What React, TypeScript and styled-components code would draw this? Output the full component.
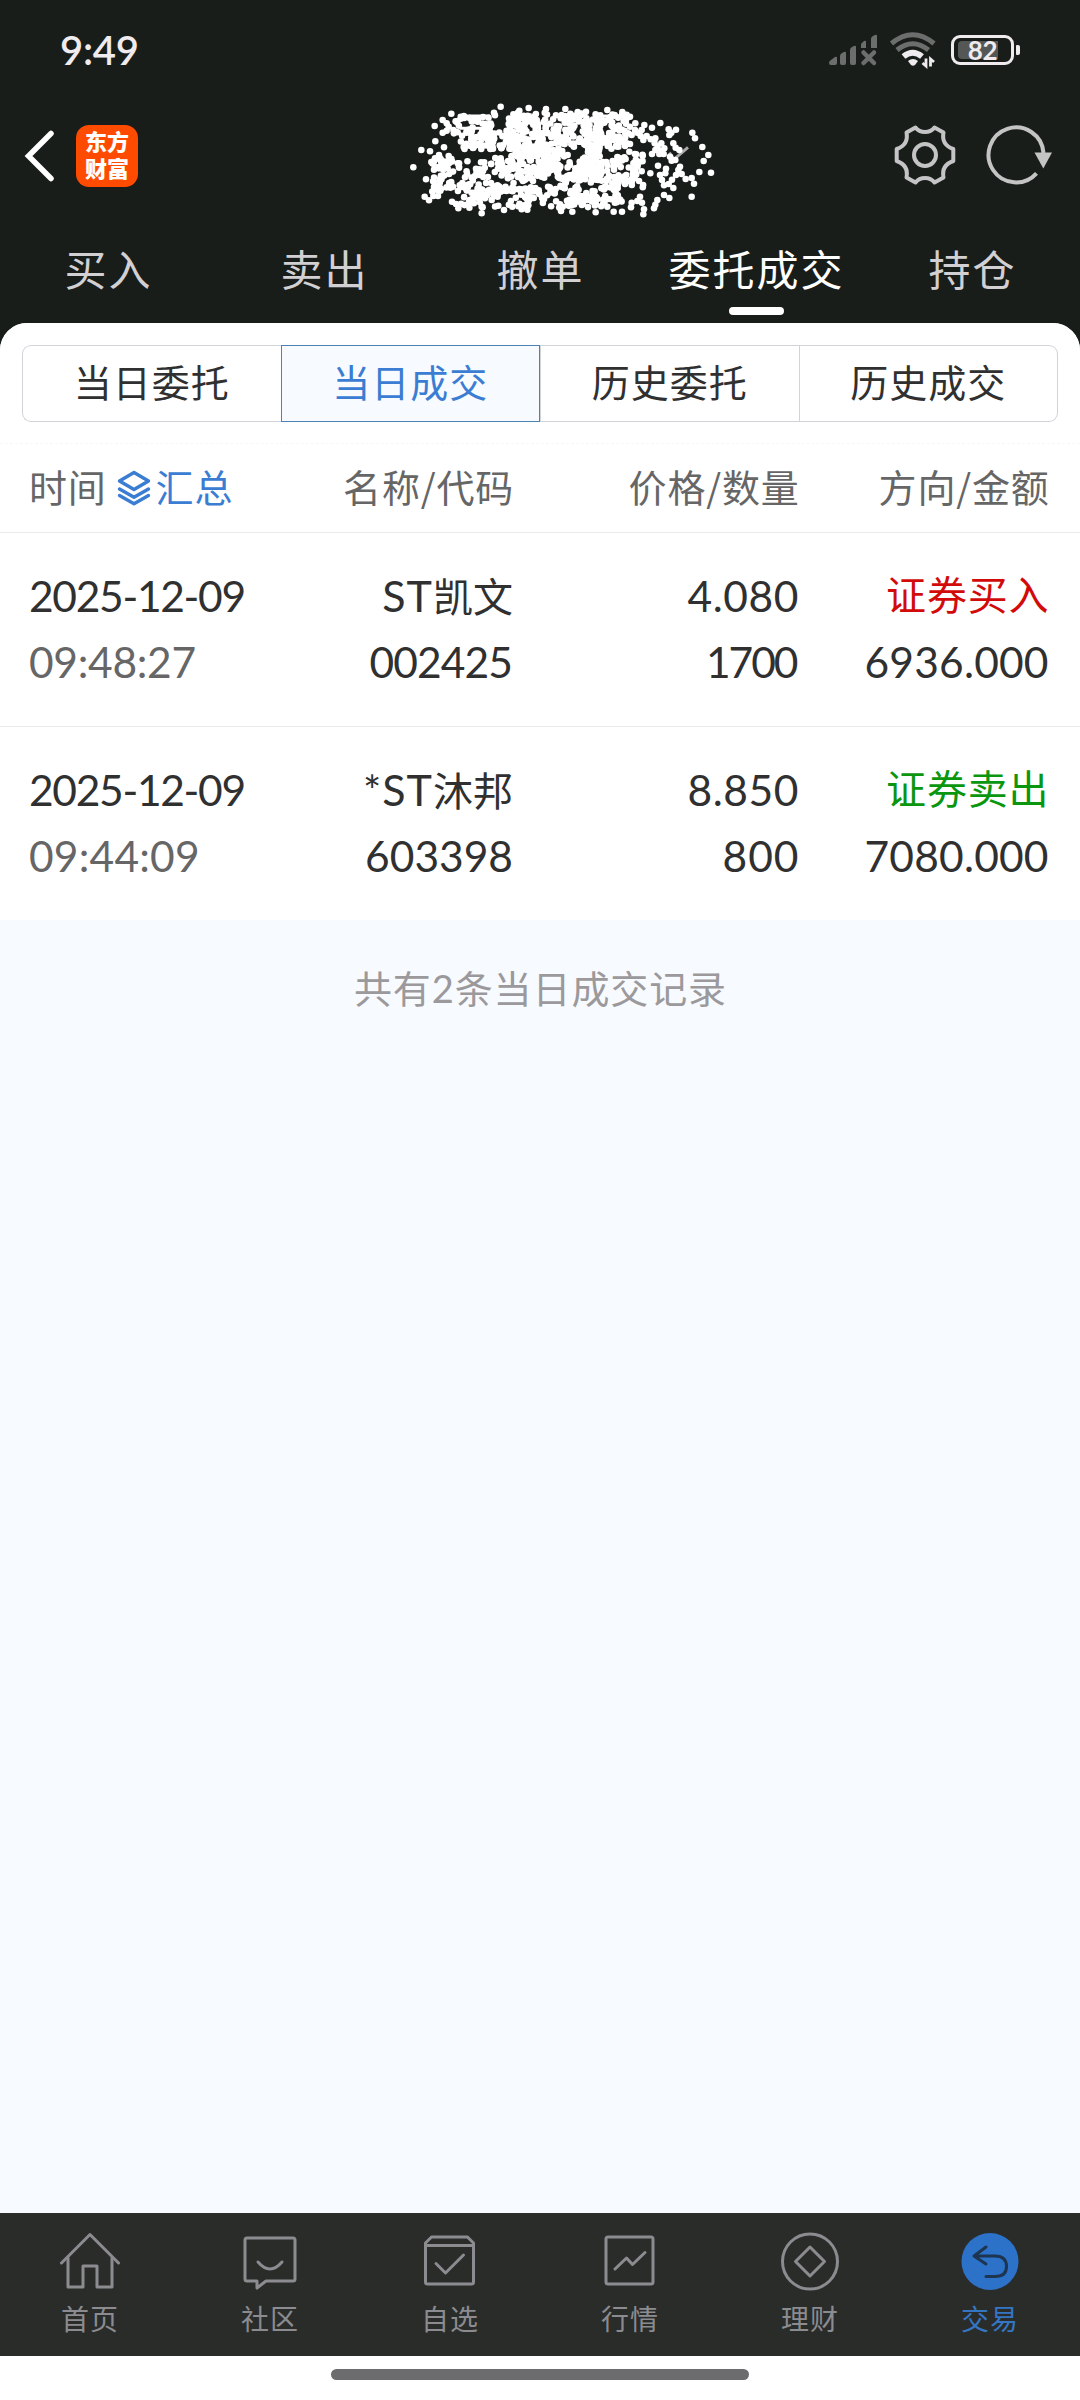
import React from "react";
import styled, { createGlobalStyle, css } from "styled-components";

const GlobalStyle = createGlobalStyle`
  * { box-sizing: border-box; }
  html, body { margin: 0; padding: 0; background: #fff; }
  body { font-family: Lato, "Noto Sans CJK SC", sans-serif; }
`;

const cjk = css`font-family: "Noto Sans CJK SC", sans-serif;`;

const Screen = styled.main`
  width: 1080px;
  height: 2400px;
  display: flex;
  flex-direction: column;
  background: #191d1a;
  overflow: hidden;
`;

const StatusBar = styled.div`
  height: 100px;
  padding: 0 60px 0 60px;
  display: flex;
  align-items: center;
  justify-content: space-between;
`;

const Clock = styled.span`
  color: #efebee;
  font-size: 40px;
  font-weight: 600;
  line-height: 48px;
  letter-spacing: -0.3px;
`;

const StatusIcons = styled.div`
  display: flex;
  align-items: center;
`;

const BatteryBox = styled.div`
  margin-left: 14px;
  display: flex;
  align-items: center;
  gap: 2px;
`;

const BatteryBody = styled.div`
  width: 63px;
  height: 30px;
  border: 3px solid #efebee;
  border-radius: 9px;
  padding: 3px 4px;
`;

const BatteryFill = styled.div`
  width: 40px;
  height: 18px;
  border-radius: 4px 0 0 4px;
  background: #555756;
  color: #efebee;
  font-size: 26px;
  font-weight: 700;
  line-height: 18px;
  text-align: right;
  padding-right: 1px;
  letter-spacing: -0.5px;
`;

const BatteryNub = styled.div`
  width: 4px;
  height: 10px;
  border-radius: 1px 2px 2px 1px;
  background: #efebee;
`;

const TitleBar = styled.header`
  height: 120px;
  display: grid;
  grid-template-columns: 405px 1fr 205px;
  padding: 0 26px 0 22px;
`;

const TitleLeft = styled.div`
  display: flex;
  align-items: center;
  padding-bottom: 8px;
  gap: 19px;
`;

const TitleRight = styled.div`
  display: flex;
  align-items: center;
  justify-content: flex-end;
  gap: 29px;
  padding-bottom: 10px;
`;

const Logo = styled.div`
  ${cjk}
  width: 62px;
  height: 62px;
  border-radius: 13px;
  background: #ff4b00;
  color: #fff;
  font-size: 22px;
  font-weight: 900;
  line-height: 27px;
  text-align: center;
  word-break: break-all;
  padding: 2px 8px 0;
`;

const TopTabs = styled.nav`
  height: 103px;
  display: grid;
  grid-template-columns: repeat(5, 1fr);
`;

const TopTab = styled.div<{ $active?: boolean }>`
  ${cjk}
  display: flex;
  flex-direction: column;
  align-items: center;
  padding-top: 16px;
  font-size: 42px;
  line-height: 64px;
  letter-spacing: 2px;
  text-indent: 1px;
  white-space: nowrap;
  color: ${(p) => (p.$active ? "#ffffff" : "#d2d0d3")};
`;

const Underline = styled.i`
  width: 55px;
  height: 8px;
  border-radius: 4px;
  margin-top: 7px;
  background: #fff;
`;

const Panel = styled.section`
  flex: 1;
  background: #f7faff;
  border-radius: 27px 27px 0 0;
  overflow: hidden;
`;

const Filters = styled.div`
  height: 121px;
  padding: 22px;
  background: #fff;
  border-bottom: 1px dashed #f7f7f7;
  display: flex;
`;

const Filter = styled.div<{ $active?: boolean }>`
  ${cjk}
  flex: 1 1 0;
  height: 77px;
  border: 1px solid ${(p) => (p.$active ? "#4d82b4" : "#d0d3d8")};
  background: ${(p) => (p.$active ? "#f7faff" : "#fff")};
  color: ${(p) => (p.$active ? "#3b7dd2" : "#303030")};
  font-size: 38px;
  line-height: 70px;
  letter-spacing: 1px;
  text-align: center;
  &:first-child { border-radius: 9px 0 0 9px; border-right: 0; }
  &:last-child { border-radius: 0 9px 9px 0; border-left: 0; }
`;

const gridRow = css`
  display: grid;
  grid-template-columns: 245px 239px 285.5px 250px;
  padding-left: 29px;
  background: #fff;
  border-bottom: 1px solid #ebebeb;
`;

const TableHead = styled.div`
  ${gridRow}
  ${cjk}
  height: 89px;
  color: #666;
  font-size: 38px;
  line-height: 83px;
  letter-spacing: 0.8px;
  white-space: nowrap;
`;

const HeadCell = styled.div`
  text-align: right;
  margin-right: -1px;
`;

const TimeHead = styled.div`
  display: flex;
  align-items: flex-start;
`;

const Summary = styled.span`
  display: flex;
  align-items: center;
  gap: 5px;
  margin-left: 10px;
  color: #3b7dd2;
  svg { margin-top: 4px; }
`;

const Record = styled.div<{ $last?: boolean }>`
  ${gridRow}
  height: 194px;
  padding-top: 30px;
  ${(p) => p.$last && "border-bottom: 0; height: 193px;"}
`;

const Cell = styled.div<{ $left?: boolean }>`
  display: flex;
  flex-direction: column;
  align-items: ${(p) => (p.$left ? "flex-start" : "flex-end")};
`;

const Line = styled.span<{ $color?: string; $track?: number }>`
  height: 66px;
  line-height: 66px;
  font-size: 42.5px;
  white-space: nowrap;
  color: ${(p) => p.$color || "#303030"};
  letter-spacing: ${(p) => p.$track ?? 0}px;
  margin-right: ${(p) => -(p.$track ?? 0)}px;
`;

const Name = styled(Line)`
  font-size: 40px;
  line-height: 65px;
`;

const Latin = styled.span`
  font-size: 43px;
  letter-spacing: 1px;
`;

const Total = styled.p`
  margin: 0;
  padding-top: 38px;
  text-align: center;
  text-indent: 1px;
  color: #9b999b;
  font-size: 38px;
  line-height: 60px;
  letter-spacing: 0.9px;
`;

const BottomNav = styled.nav`
  height: 143px;
  background: #2a2c2a;
  display: grid;
  grid-template-columns: repeat(6, 1fr);
`;

const NavItem = styled.div<{ $active?: boolean }>`
  ${cjk}
  display: flex;
  flex-direction: column;
  align-items: center;
  padding-top: 17px;
  color: ${(p) => (p.$active ? "#3476c4" : "#8b8b90")};
  font-size: 28px;
  line-height: 40px;
  letter-spacing: 1px;
  svg { margin-bottom: 6px; flex: none; }
`;

const GestureArea = styled.div`
  height: 44px;
  background: #fff;
  display: flex;
  justify-content: center;
  padding-top: 13px;
`;

const GestureBar = styled.div`
  width: 418px;
  height: 11px;
  border-radius: 6px;
  background: #6c6b6d;
`;

const WifiSvg = styled.svg`
  margin-left: 11px;
`;

function Signal() {
  return (
    <svg width="50" height="36" viewBox="828 33 50 36" fill="#6c6e6d">
      <path d="M829 64q0-2 2-3l4-3q2-1 2 1v5q0 2-2 2h-4q-2 0-2-2z" />
      <path d="M840 57q0-2 2-3l2-1q2-1 2 1v10q0 2-2 2h-2q-2 0-2-2z" />
      <path d="M850 51q0-2 2-3l2-1q2-1 2 1v16q0 2-2 2h-2q-2 0-2-2z" />
      <path d="M861 46q0-2 2-3l1-1q2-1 2 1v6h-5zM871 40q0-2 2-3l2-1q2-1 2 1v12h-6z" />
      <path d="M863.500 53.500l10.500 10.500M874 53.500l-10.500 10.500" stroke="#6c6e6d" strokeWidth="4.500" strokeLinecap="round" />
    </svg>
  );
}

function Wifi() {
  return (
    <WifiSvg width="48" height="38" viewBox="889 32 48 38" fill="none">
      <path d="M891.500 44.500q21.200-17.500 42.500 0" stroke="#6c6e6d" strokeWidth="5" />
      <path d="M897 51q15.700-12.500 31.500 0" stroke="#6c6e6d" strokeWidth="5" />
      <path d="M903.500 57.500q9.200-7.500 18.500 0" stroke="#efebee" strokeWidth="6" />
      <path d="M908 62q5-4 10 0l-3 4q-2 1.500-4 0z" fill="#efebee" />
      <path d="M926 59.500v7.500l-3.500-3M930.500 67.500v-7.500l3.500 3" stroke="#efebee" strokeWidth="2.800" />
    </WifiSvg>
  );
}

function Back() {
  return (
    <svg width="35" height="56" viewBox="22 128 35 56" fill="none">
      <path d="M51 133.500L28.500 156 51 178.500" stroke="#fff" strokeWidth="5.500" strokeLinecap="round" />
    </svg>
  );
}

function Gear() {
  return (
    <svg width="64" height="64" viewBox="-32 -32 64 64" fill="none" stroke="#c4c3c5" strokeWidth="4" strokeLinejoin="round">
      <circle r="11" />
      <path d="M-9.500-27.500Q-6-23 0-23T9.500-27.500L18.500-22.500C17-15 20-9 28.300-6V6C20 9 17 15 18.500 22.500L9.500 27.500Q6 23 0 23T-9.500 27.500L-18.500 22.500C-17 15-20 9-28.300 6V-6C-20-9-17-15-18.500-22.500Z" />
    </svg>
  );
}

function Refresh() {
  return (
    <svg width="68" height="64" viewBox="-30 -32 68 64" fill="none">
      <path d="M20.500 18.300A27.500 27.500 0 1 1 27.500-2" stroke="#c4c4c4" strokeWidth="4" />
      <path d="M18.500-2.500H36L27.300 13.500Z" fill="#c4c4c4" />
    </svg>
  );
}

// Stray dots round the edge of the masked account name.
const EDGE_DOTS: number[][] = [
  [100, 262], [124, 210], [150, 214], [164, 138], [166, 184], [138, 298], [134, 350], [147, 361], [160, 348], [174, 348],
  [188, 120], [200, 152], [188, 158], [200, 130], [206, 140], [214, 101], [362, 80], [342, 98], [446, 84], [418, 92], [498, 87], [556, 87],
  [593, 96], [618, 95], [682, 90], [727, 96], [750, 110], [766, 130], [793, 135], [816, 143], [841, 129], [866, 148],
  [874, 158], [888, 149], [868, 165], [937, 158], [945, 175], [967, 201], [985, 225], [971, 243], [958, 276], [993, 278],
  [942, 311], [935, 350], [935, 294], [917, 297], [900, 260], [895, 270], [905, 282], [888, 285], [876, 299], [880, 324],
  [866, 312], [852, 345], [868, 354], [832, 360], [826, 374], [822, 385], [790, 403], [792, 388], [753, 382], [726, 395],
  [701, 395], [647, 397], [577, 395], [543, 393], [442, 389], [425, 388], [372, 390], [305, 400], [308, 382], [235, 385],
  [228, 372], [216, 365], [780, 350], [786, 368], [772, 363], [755, 368], [811, 280], [834, 257], [858, 266], [856, 280],
  [840, 285], [846, 300], [852, 316], [162, 320], [183, 326], [154, 246], [165, 235], [177, 225], [192, 202], [206, 228],
  [880, 190], [887, 203], [898, 210], [870, 230], [875, 242], [886, 240], [800, 168], [812, 178], [824, 190], [833, 200],
  [843, 213], [826, 210], [816, 222], [838, 222], [853, 205], [826, 175], [790, 180], [782, 168], [851, 222], [844, 190],
  [750, 192], [748, 215], [735, 190], [765, 150], [750, 140], [772, 158], [785, 150], [738, 120], [745, 160], [755, 165],
];

function scatter(): number[][] {
  let seed = 90217;
  const next = () => {
    seed = (seed * 16807) % 2147483647;
    return seed / 2147483647;
  };
  const dots: number[][] = [];
  const zones: [number, number, number, number, number][] = [
    [220, 105, 345, 165, 42],
    [245, 155, 400, 208, 72],
    [385, 96, 565, 230, 165],
    [555, 100, 740, 210, 145],
    [380, 195, 540, 295, 95],
    [155, 232, 405, 335, 118],
    [415, 245, 605, 383, 135],
    [605, 175, 665, 305, 75],
    [585, 245, 712, 380, 88],
    [700, 222, 800, 333, 54],
    [240, 320, 445, 383, 56],
    [590, 345, 730, 385, 20],
  ];
  const holes = [
    [512, 300, 20], [547, 352, 16], [356, 180, 13], [562, 208, 14],
    [390, 345, 10], [640, 318, 11], [575, 270, 12], [725, 335, 14],
  ];
  zones.forEach(([x0, y0, x1, y1, n]) => {
    for (let i = 0; i < n; i++) {
      const x = x0 + (x1 - x0) * next() + (next() - 0.5) * 16;
      const y = y0 + (y1 - y0) * next();
      if (!holes.some(([hx, hy, r]) => Math.hypot(x - hx, y - hy) < r)) dots.push([x, y]);
    }
  });
  return dots;
}

const DOTS = [...EDGE_DOTS, ...scatter()];

const ScribbleSvg = styled.svg`
  display: block;
  margin-left: -47px;
  flex: none;
`;

function Scribble() {
  return (
    <ScribbleSvg width="360" height="120" viewBox="0 60 1080 360" fill="#fff">
      <path d="M868 218L882 238 924 202" fill="none" stroke="#aaa9ab" strokeWidth="9" />
      <path d="M235 108H330M240 145H330M405 104H455M640 108H735M700 150H735" stroke="#fff" strokeWidth="9" />
      {DOTS.map(([x, y], i) => (
        <circle key={i} cx={x} cy={y} r="9.800" />
      ))}
    </ScribbleSvg>
  );
}

function Layers() {
  return (
    <svg width="34" height="36" viewBox="0 0 34 36" fill="none" stroke="#3b7dd2" strokeWidth="3.400" strokeLinejoin="round" strokeLinecap="round">
      <path d="M17 2.500L31.500 11 17 19.500 2.500 11Z" />
      <path d="M2.500 19L17 27.200 31.500 19M2.500 25.500L17 33.700 31.500 25.500" />
    </svg>
  );
}

const NAV_ICONS: Record<string, React.ReactNode> = {
  home: (
    <>
      <path d="M1.500 33L30 4.500 58.500 33" />
      <path d="M8 28V57H23V36H37V57H52V28" />
    </>
  ),
  community: (
    <>
      <path d="M7 8H53Q55 8 55 10V49Q55 51 53 51H26L17 58V51H7Q5 51 5 49V10Q5 8 7 8Z" />
      <path d="M18 32Q30 46 42 32" />
    </>
  ),
  favorites: (
    <>
      <path d="M5.500 13L11.500 7H47.500L53.500 13V52Q53.500 54 51.500 54H7.500Q5.500 54 5.500 52ZM5.500 15.500H53.500" />
      <path d="M16 33.500L25.500 43 43.500 25" />
    </>
  ),
  market: (
    <>
      <rect x="6" y="7" width="47" height="47" rx="2" />
      <path d="M15 39L26.500 28 32.500 34.500 45 22.500" />
    </>
  ),
  wealth: (
    <>
      <circle cx="30" cy="31.500" r="27.500" />
      <path d="M30 17L44.500 31.500 30 46 15.500 31.500Z" />
    </>
  ),
  trade: (
    <>
      <circle cx="30" cy="31.500" r="28.500" fill="#2b72c8" stroke="none" />
      <path d="M26 17L14 26 26 34M14 26H35Q46.500 26 46.500 36.500 46.500 46.500 35 46.500H26" stroke="#1d3550" />
    </>
  ),
};

const NAV = [
  ["home", "首页"],
  ["community", "社区"],
  ["favorites", "自选"],
  ["market", "行情"],
  ["wealth", "理财"],
  ["trade", "交易"],
];

const RECORDS = [
  { date: "2025-12-09", time: "09:48:27", latin: "ST", name: "凯文", code: "002425", price: "4.080", qty: "1700", side: "证券买入", color: "#d20a0a", amount: "6936.000", timeTrack: -0.3, codeTrack: -0.9, qtyTrack: -2 },
  { date: "2025-12-09", time: "09:44:09", latin: "*ST", name: "沐邦", code: "603398", price: "8.850", qty: "800", side: "证券卖出", color: "#0a960f", amount: "7080.000", timeTrack: 0.2, codeTrack: 0, qtyTrack: 1 },
];

export default function App() {
  return (
    <Screen>
      <GlobalStyle />
      <StatusBar>
        <Clock>9:49</Clock>
        <StatusIcons>
          <Signal />
          <Wifi />
          <BatteryBox>
            <BatteryBody>
              <BatteryFill>82</BatteryFill>
            </BatteryBody>
            <BatteryNub />
          </BatteryBox>
        </StatusIcons>
      </StatusBar>
      <TitleBar>
        <TitleLeft>
          <Back />
          <Logo>东方财富</Logo>
        </TitleLeft>
        <Scribble />
        <TitleRight>
          <Gear />
          <Refresh />
        </TitleRight>
      </TitleBar>
      <TopTabs>
        {["买入", "卖出", "撤单", "委托成交", "持仓"].map((t, i) => (
          <TopTab key={t} $active={i === 3}>
            {t}
            {i === 3 && <Underline />}
          </TopTab>
        ))}
      </TopTabs>
      <Panel>
        <Filters>
          {["当日委托", "当日成交", "历史委托", "历史成交"].map((t, i) => (
            <Filter key={t} $active={i === 1}>{t}</Filter>
          ))}
        </Filters>
        <TableHead>
          <TimeHead>
            时间
            <Summary><Layers />汇总</Summary>
          </TimeHead>
          <HeadCell>名称/代码</HeadCell>
          <HeadCell>价格/数量</HeadCell>
          <HeadCell>方向/金额</HeadCell>
        </TableHead>
        {RECORDS.map((r, i) => (
          <Record key={r.code} $last={i === RECORDS.length - 1}>
            <Cell $left>
              <Line $track={-1.3}>{r.date}</Line>
              <Line $color="#666" $track={r.timeTrack}>{r.time}</Line>
            </Cell>
            <Cell>
              <Name><Latin>{r.latin}</Latin>{r.name}</Name>
              <Line $track={r.codeTrack}>{r.code}</Line>
            </Cell>
            <Cell>
              <Line $track={0.6}>{r.price}</Line>
              <Line $track={r.qtyTrack}>{r.qty}</Line>
            </Cell>
            <Cell>
              <Name $color={r.color} $track={0.8}>{r.side}</Name>
              <Line $track={0.2}>{r.amount}</Line>
            </Cell>
          </Record>
        ))}
        <Total>共有2条当日成交记录</Total>
      </Panel>
      <BottomNav>
        {NAV.map(([icon, label]) => (
          <NavItem key={icon} $active={icon === "trade"}>
            <svg width="60" height="62" viewBox="0 0 60 62" fill="none" stroke="#8b8b90" strokeWidth="3" strokeLinejoin="round" strokeLinecap="round">
              {NAV_ICONS[icon]}
            </svg>
            {label}
          </NavItem>
        ))}
      </BottomNav>
      <GestureArea>
        <GestureBar />
      </GestureArea>
    </Screen>
  );
}
